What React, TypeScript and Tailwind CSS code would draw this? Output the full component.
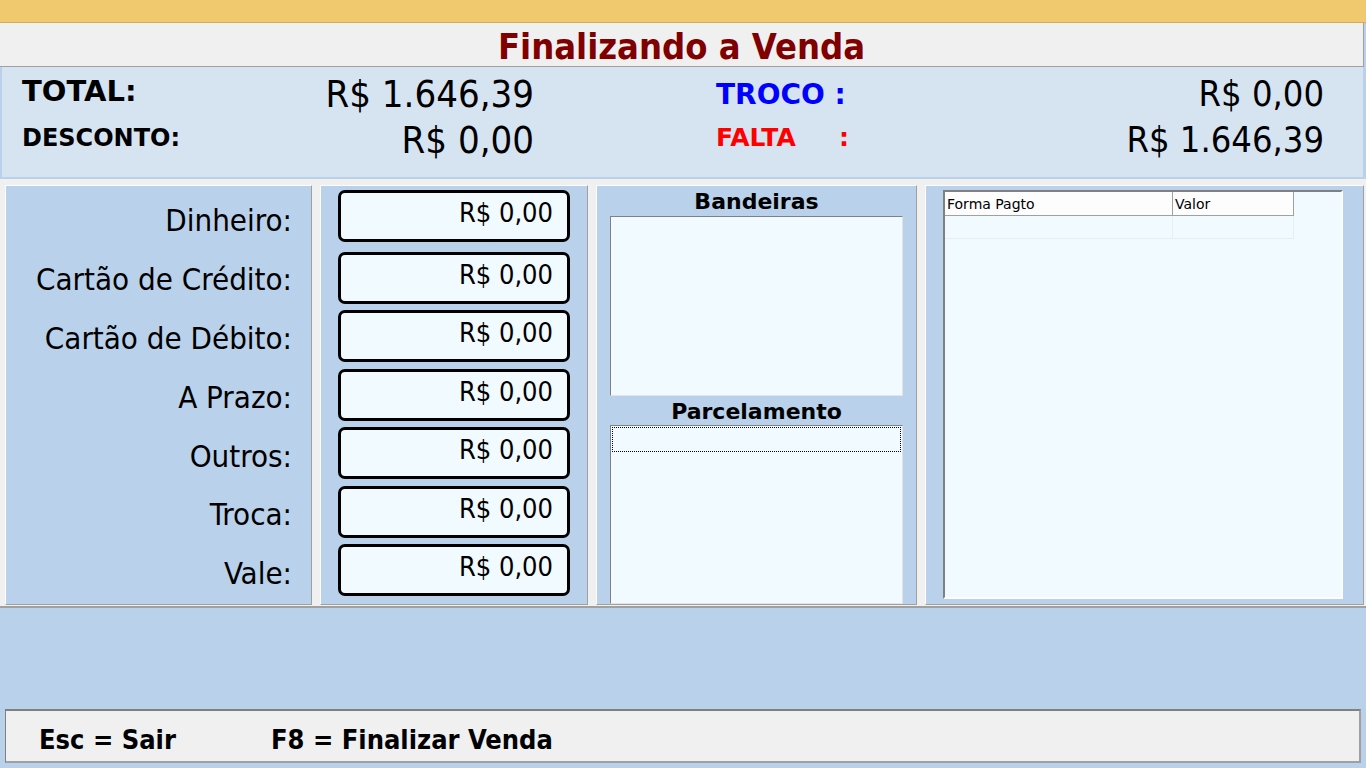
const FONT = { fontFamily: '"DejaVu Sans Condensed", "DejaVu Sans", sans-serif' };
const WIDE = { fontFamily: '"DejaVu Sans", sans-serif' };

const pagamentos = [
  { label: 'Dinheiro:', valor: 'R$ 0,00', mt: 'mt-[4px]', lp: 'pt-[8px]' },
  { label: 'Cartão de Crédito:', valor: 'R$ 0,00', mt: 'mt-[10px]', lp: 'pt-[2px]' },
  { label: 'Cartão de Débito:', valor: 'R$ 0,00', mt: 'mt-[6px]', lp: 'pt-[4px]' },
  { label: 'A Prazo:', valor: 'R$ 0,00', mt: 'mt-[7px]', lp: 'pt-[4px]' },
  { label: 'Outros:', valor: 'R$ 0,00', mt: 'mt-[6px]', lp: 'pt-[6px]' },
  { label: 'Troca:', valor: 'R$ 0,00', mt: 'mt-[7px]', lp: 'pt-[4px]' },
  { label: 'Vale:', valor: 'R$ 0,00', mt: 'mt-[6px]', lp: 'pt-[6px]' },
];

function Panel({ className, children }: { className: string; children?: React.ReactNode }) {
  return (
    <div className={`h-full bg-[#b9d1ea] border-t border-l border-t-[#fcfcfc] border-l-[#fcfcfc] border-b border-r border-b-[#a0a0a0] border-r-[#a0a0a0] ${className}`}>
      {children}
    </div>
  );
}

export default function App() {
  return (
    <div className="w-[1366px] h-[768px] bg-[#b9d1ea] flex flex-col overflow-hidden text-black" style={FONT}>
      {/* barra superior */}
      <div className="h-[23px] bg-[#f0c96e] border-b border-[#d6ad55]" />

      {/* título */}
      <div className="h-[44px] mr-[2px] bg-[#f0f0f0] border-b border-r border-[#a0a0a0] flex items-center justify-center">
        <h1 className="text-[36px] leading-none font-bold text-[#800000] mt-[4px]">Finalizando a Venda</h1>
      </div>

      {/* totais */}
      <div className="h-[112px] mr-[3px] bg-[#d6e4f2] border-l-2 border-b-2 border-[#b9d1ea] flex pl-[20px]">
        <div className="w-[200px] flex flex-col font-bold" style={WIDE}>
          <span className="text-[29px] leading-none mt-[10px]">TOTAL:</span>
          <span className="text-[24px] leading-none mt-[20px]">DESCONTO:</span>
        </div>
        <div className="w-[312px] flex flex-col items-end">
          <span className="text-[38px] leading-none mt-[8px]">R$ 1.646,39</span>
          <span className="text-[38px] leading-none mt-[8px]">R$ 0,00</span>
        </div>
        <div className="w-[200px] ml-[182px] flex flex-col font-bold" style={WIDE}>
          <span className="text-[28px] leading-none mt-[14px] text-[#0000ff]">TROCO :</span>
          <div className="flex text-[25px] leading-none mt-[16px] text-[#ff0000]">
            <span className="w-[123px]">FALTA</span>
            <span>:</span>
          </div>
        </div>
        <div className="flex-1 pr-[39px] flex flex-col items-end">
          <span className="text-[36px] leading-none mt-[9px]">R$ 0,00</span>
          <span className="text-[36px] leading-none mt-[10px]">R$ 1.646,39</span>
        </div>
      </div>

      {/* painéis */}
      <div className="h-[429px] bg-[#f0f0f0] border-b-2 border-[#a0a0a0] flex pl-[5px] pr-[2px] pt-[6px] pb-[1px] gap-[8px]">
        <Panel className="w-[307px] flex flex-col items-end pr-[19px]">
          {pagamentos.map(p => (
            <div key={p.label} className={`h-[52px] ${p.mt} ${p.lp} flex items-center`}>
              <span className="text-[31px] leading-none">{p.label}</span>
            </div>
          ))}
        </Panel>

        <Panel className="w-[268px] flex flex-col pl-[17px]">
          {pagamentos.map(p => (
            <div
              key={p.label}
              className={`w-[232px] h-[52px] ${p.mt} bg-[#f0faff] border-[3px] border-black rounded-[7px] flex justify-end pr-[14px] pt-[6px]`}
            >
              <span className="text-[27px] leading-none">{p.valor}</span>
            </div>
          ))}
        </Panel>

        <Panel className="w-[321px] flex flex-col items-center">
          <span className="text-[22px] leading-none font-bold mt-[5px]" style={WIDE}>Bandeiras</span>
          <div className="w-[293px] h-[180px] mt-[3px] bg-[#f0faff] border border-t-[#808080] border-l-[#808080] border-b-[#e3e3e3] border-r-[#e3e3e3]" />
          <span className="text-[22px] leading-none font-bold mt-[5px]" style={WIDE}>Parcelamento</span>
          <div className="w-[293px] flex-1 mt-[2px] bg-[#f0faff] border border-t-[#808080] border-l-[#808080] border-b-[#e3e3e3] border-r-[#e3e3e3] p-px">
            <div className="h-[25px] border border-dotted border-black" />
          </div>
        </Panel>

        <Panel className="flex-1 pl-[17px] pr-[20px] pt-[4px] pb-[5px]">
          <div className="h-full bg-[#f0faff] border-2 border-t-[#808080] border-l-[#808080] border-b-[#fcfcfc] border-r-[#fcfcfc]">
            <div className="flex h-[24px] text-[14px] leading-none" style={WIDE}>
              <div className="w-[228px] bg-[#fdfdfd] border-r border-b border-[#a0a0a0] flex items-center pl-[2px]">Forma Pagto</div>
              <div className="w-[121px] bg-[#fdfdfd] border-r border-b border-[#a0a0a0] flex items-center pl-[2px]">Valor</div>
            </div>
            <div className="flex h-[23px]">
              <div className="w-[228px] border-r border-b border-[#e6eef2]" />
              <div className="w-[121px] border-r border-b border-[#e6eef2]" />
            </div>
          </div>
        </Panel>
      </div>

      <div className="flex-1" />

      {/* rodapé */}
      <div className="h-[54px] mx-[5px] mb-[5px] bg-[#f0f0f0] border-t-2 border-l border-t-[#808080] border-l-[#808080] border-b-2 border-r-2 border-b-[#a0a0a0] border-r-[#a0a0a0] flex items-end pb-[8px] pl-[33px] font-bold">
        <span className="text-[27px] leading-none w-[232px]">Esc = Sair</span>
        <span className="text-[27px] leading-none">F8 = Finalizar Venda</span>
      </div>
    </div>
  );
}
